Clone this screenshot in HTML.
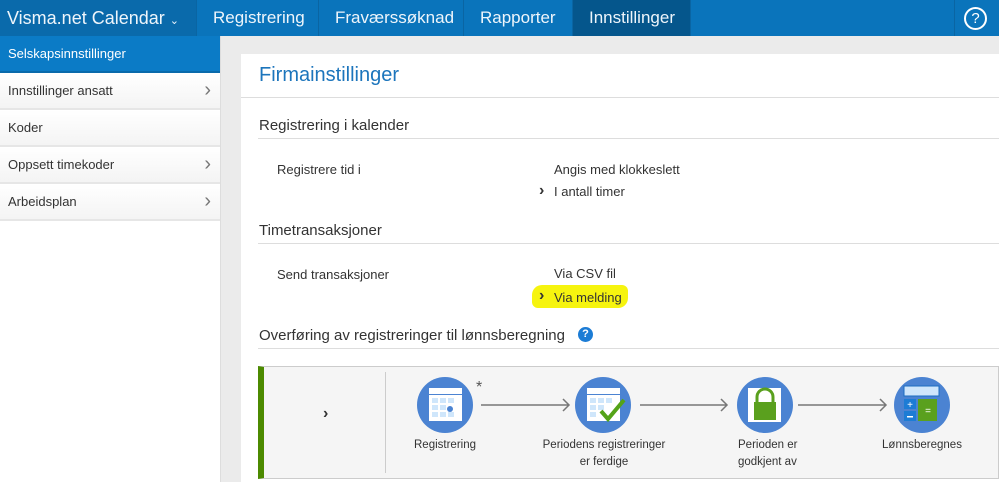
<!DOCTYPE html>
<html><head><meta charset="utf-8"><style>
*{margin:0;padding:0;box-sizing:border-box}
body{width:999px;height:482px;overflow:hidden;background:#ebebeb;font-family:"Liberation Sans",sans-serif;position:relative;color:#333}
.top{position:absolute;left:0;top:0;width:999px;height:36px;background:#0a74bb}
.tab{position:absolute;top:0;height:36px;color:#eef5fb;font-size:17px;line-height:36px;border-right:1px solid #0a65a3}
.side{position:absolute;left:0;top:36px;width:221px;height:446px;background:#fff;border-right:1px solid #ddd}
.si{height:37px;line-height:36px;padding-left:8px;font-size:13px;color:#333;border-bottom:2px solid #e6e6e6;position:relative;background:linear-gradient(#fff,#f4f4f4)}
.si .ch{position:absolute;right:9px;top:-1px;color:#777;font-size:20px}
.main{position:absolute;left:241px;top:54px;width:758px;height:428px;background:#fff}
.abs{position:absolute;font-size:13px;color:#333;white-space:nowrap}
.hl{position:absolute;left:258px;right:0;height:1px;background:#ddd}
.h2{position:absolute;font-size:15px;color:#333;white-space:nowrap}
.circle{position:absolute;width:56px;height:56px;border-radius:50%;background:#4b83d2}
.lbl{position:absolute;font-size:11.5px;color:#333;text-align:center;line-height:17px}
</style></head><body>
<div class="top">
<div class="tab" style="left:0;width:197px;padding-left:7px;font-size:18px;background:#0a6aab">Visma.net Calendar <span style="font-size:11px">&#8964;</span></div>
<div class="tab" style="left:197px;width:122px;padding-left:16px">Registrering</div>
<div class="tab" style="left:319px;width:145px;padding-left:16px">Fraværssøknad</div>
<div class="tab" style="left:464px;width:109px;padding-left:16px">Rapporter</div>
<div class="tab" style="left:573px;width:118px;padding-left:16px;background:#05568c">Innstillinger</div>
<div style="position:absolute;left:954px;top:0;width:1px;height:36px;background:#0a65a3"></div>
<div style="position:absolute;left:964px;top:7px;width:23px;height:23px;border:2px solid #fff;border-radius:50%;color:#fff;font-size:15px;text-align:center;line-height:19px">?</div>
</div>
<div class="side">
<div class="si" style="background:#0b7bc6;color:#fff;border-bottom:2px solid #0a6aab">Selskapsinnstillinger</div>
<div class="si">Innstillinger ansatt<span class="ch">›</span></div>
<div class="si">Koder</div>
<div class="si">Oppsett timekoder<span class="ch">›</span></div>
<div class="si">Arbeidsplan<span class="ch">›</span></div>
</div>
<div class="main"></div>
<div class="abs" style="left:259px;top:64px;font-size:20px;color:#1c75bc">Firmainstillinger</div>
<div class="hl" style="left:241px;top:97px"></div>
<div class="h2" style="left:259px;top:117px">Registrering i kalender</div>
<div class="hl" style="top:138px"></div>
<div class="abs" style="left:277px;top:162px">Registrere tid i</div>
<div class="abs" style="left:554px;top:162px">Angis med klokkeslett</div>
<div class="abs" style="left:539px;top:182px;font-size:16px;font-weight:bold">›</div>
<div class="abs" style="left:554px;top:184px">I antall timer</div>
<div class="h2" style="left:259px;top:222px">Timetransaksjoner</div>
<div class="hl" style="top:243px"></div>
<div class="abs" style="left:277px;top:267px">Send transaksjoner</div>
<div class="abs" style="left:554px;top:266px">Via CSV fil</div>
<div style="position:absolute;left:532px;top:285px;width:96px;height:23px;background:#f6f40f;border-radius:10px 6px 10px 6px"></div>
<div class="abs" style="left:539px;top:287px;font-size:16px;font-weight:bold">›</div>
<div class="abs" style="left:554px;top:290px">Via melding</div>
<div class="h2" style="left:259px;top:327px">Overføring av registreringer til lønnsberegning</div>
<div style="position:absolute;left:578px;top:327px;width:15px;height:15px;border-radius:50%;background:#1c7cd5;color:#fff;font-size:11px;font-weight:bold;text-align:center;line-height:15px">?</div>
<div class="hl" style="top:348px"></div>
<div style="position:absolute;left:258px;top:366px;width:741px;height:113px;background:#f5f5f5;border:1px solid #ccc;border-left:6px solid #4c8a00"></div>
<div style="position:absolute;left:385px;top:372px;width:1px;height:101px;background:#ccc"></div>
<div class="abs" style="left:323px;top:405px;font-size:16px;font-weight:bold">›</div>
<svg style="position:absolute;left:0;top:0" width="999" height="482">
<g stroke="#777" stroke-width="1.5" fill="none">
<path d="M481 405H569M563 399L569 405L563 411"/>
<path d="M640 405H727M721 399L727 405L721 411"/>
<path d="M798 405H886M880 399L886 405L880 411"/>
</g>
</svg>
<div class="circle" style="left:417px;top:377px"></div>
<div class="circle" style="left:575px;top:377px"></div>
<div class="circle" style="left:737px;top:377px"></div>
<div class="circle" style="left:894px;top:377px"></div>
<svg style="position:absolute;left:0;top:0" width="999" height="482">
<g>
<rect x="429" y="388" width="33" height="33" fill="#fff"/><rect x="429" y="394" width="33" height="1" fill="#4b83d2"/>
<g fill="#cfe6fb"><rect x="432" y="398" width="6" height="5"/><rect x="440" y="398" width="6" height="5"/><rect x="448" y="398" width="6" height="5"/><rect x="432" y="405" width="6" height="5"/><rect x="440" y="405" width="6" height="5"/><rect x="432" y="412" width="6" height="5"/><rect x="440" y="412" width="6" height="5"/><rect x="448" y="412" width="6" height="5"/></g>
<circle cx="450" cy="409" r="3" fill="#4b83d2"/>
<rect x="587" y="388" width="33" height="33" fill="#fff"/><rect x="587" y="394" width="33" height="1" fill="#4b83d2"/>
<g fill="#cfe6fb"><rect x="590" y="398" width="6" height="5"/><rect x="598" y="398" width="6" height="5"/><rect x="606" y="398" width="6" height="5"/><rect x="590" y="405" width="6" height="5"/><rect x="598" y="405" width="6" height="5"/><rect x="590" y="412" width="6" height="5"/></g>
<path d="M601 411L608 419L624 400" stroke="#54a318" stroke-width="4" fill="none"/>
<rect x="748" y="388" width="33" height="34" fill="#fff"/>
<path d="M757 403V397a8 8 0 0 1 16 0V403" stroke="#5aa01e" stroke-width="3" fill="none"/>
<rect x="754" y="402" width="22" height="18" fill="#5aa01e"/>
<rect x="904" y="386" width="35" height="10" fill="#cfe6fb" stroke="#1c6cc0"/>
<rect x="904" y="399" width="12" height="10" fill="#1c7cd5"/><rect x="904" y="411" width="12" height="10" fill="#1c7cd5"/>
<rect x="918" y="399" width="19" height="22" fill="#5aa01e"/>
<text x="910" y="408" fill="#fff" font-size="10" text-anchor="middle" font-family="Liberation Sans">+</text>
<text x="928" y="414" fill="#fff" font-size="10" text-anchor="middle" font-family="Liberation Sans">=</text>
<rect x="907" y="416" width="6" height="1.5" fill="#fff"/>
</g>
<text x="476" y="392" fill="#555" font-size="16" font-family="Liberation Sans">*</text>
</svg>
<div class="lbl" style="left:395px;top:437px;width:100px">Registrering</div>
<div class="lbl" style="left:530px;top:437px;width:148px">Periodens registreringer<br>er ferdige</div>
<div class="lbl" style="left:738px;top:437px;width:80px;text-align:left">Perioden er<br>godkjent av</div>
<div class="lbl" style="left:872px;top:437px;width:100px">Lønnsberegnes</div>
</body></html>
